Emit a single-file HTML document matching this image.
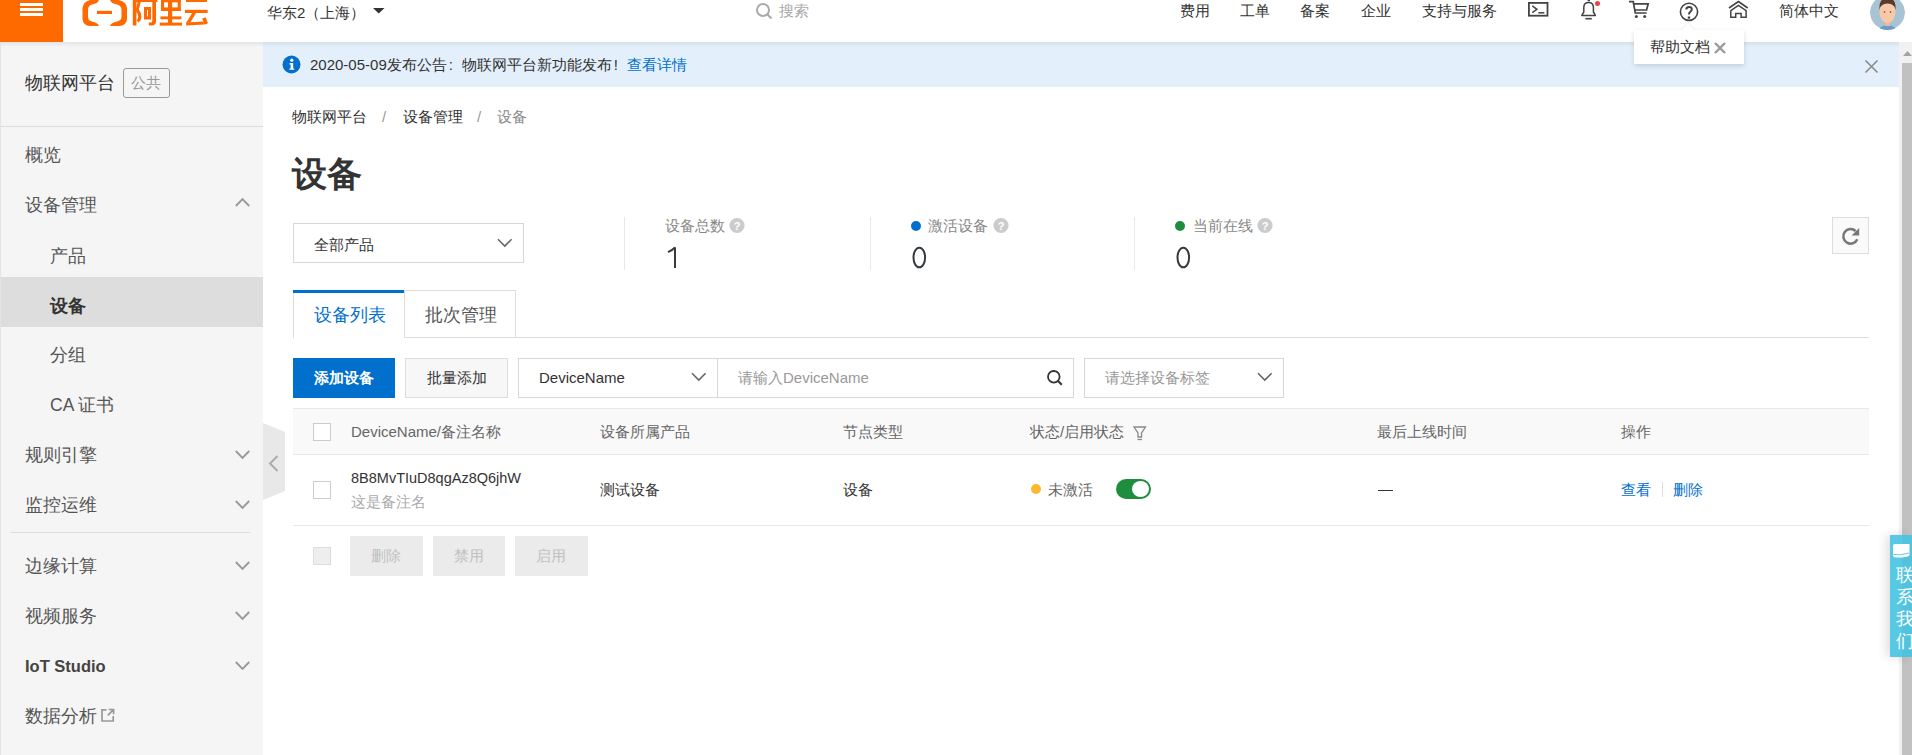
<!DOCTYPE html>
<html><head><meta charset="utf-8">
<style>
*{box-sizing:border-box;margin:0;padding:0}
html,body{width:1912px;height:755px;overflow:hidden;background:#fff}
body{font-family:"Liberation Sans",sans-serif;color:#333;position:relative}
.a{position:absolute;white-space:nowrap}
.f15{font-size:15px;line-height:20px}
.f17{font-size:17.5px;line-height:20px}
svg{position:absolute;overflow:visible}
</style></head><body>

<!-- HEADER -->
<div class="a" style="left:0;top:0;width:1912px;height:42px;background:#fff"></div>
<div class="a" style="left:0;top:0;width:63px;height:42px;background:#ff6a00"></div>
<div class="a" style="left:20px;top:3px;width:23px;height:3px;background:#fff"></div>
<div class="a" style="left:20px;top:8px;width:23px;height:3px;background:#fff"></div>
<div class="a" style="left:20px;top:13px;width:23px;height:3px;background:#fff"></div>

<!-- logo -->
<svg style="left:0;top:0" width="220" height="42">
  <g fill="#ff6a00">
    <path d="M95 0 L90 0 Q83 2 82.5 8 L82.5 19 Q83 25.5 90 26 L99 26 Q98 22.5 92 21.5 Q88 20.5 88 17 L88 10 Q88 5.5 92 4.5 Q98 3.5 99 0 Z"/>
    <path d="M113 0 L119 0 Q126.5 2 127 8 L127 19 Q126.5 25.5 119 26 L110 26 Q111 22.5 117 21.5 Q121.5 20.5 121.5 17 L121.5 10 Q121.5 5.5 117 4.5 Q111 3.5 110 0 Z"/>
    <rect x="97" y="10.8" width="15" height="3.2"/>
  </g>
  <g fill="#ff6a00">
    <rect x="132.8" y="0" width="3.6" height="25.5"/>
    <path d="M134 -1 L141.5 -1 L138.8 9.5 Q141.6 13 141.4 17 Q141.2 21 138.2 22.5 L136.8 20 Q138.2 19 138.2 16.8 Q138.2 13.8 135.5 10.2 L137.6 2.2 L134 2.2 Z"/>
    <rect x="136" y="-1" width="21.4" height="3"/>
    <rect x="152.3" y="0" width="3.7" height="22.5"/>
    <path d="M152.3 21 L156 21 Q156 25.6 151.5 25.6 L149 25.6 L148.6 22.6 L151 22.6 Q152.3 22.6 152.3 21 Z"/>
    <path d="M144 7 L151 7 L151 19.6 L144 19.6 Z M147 10 L147 16.6 L148 16.6 L148 10 Z" fill-rule="evenodd"/>
    <rect x="161" y="-1" width="19.8" height="3.3"/>
    <rect x="161" y="7.4" width="19.8" height="3.6"/>
    <rect x="161" y="0" width="3.1" height="11"/>
    <rect x="177.7" y="0" width="3.1" height="11"/>
    <rect x="168" y="0" width="4.2" height="24"/>
    <rect x="160.4" y="16.4" width="21" height="2.9"/>
    <rect x="159.8" y="22.6" width="22.3" height="3"/>
    <rect x="186" y="-1" width="21" height="3"/>
    <rect x="185" y="9.8" width="22.7" height="3.2"/>
    <path d="M192.2 13 L196 13 L190.2 22.8 L186.2 22.8 Z"/>
    <path d="M186 22.6 L203.5 21.6 L204 24.6 L186.3 25.6 Z"/>
    <path d="M202.3 18.6 L205.6 17.2 L208 23.3 L204.4 24.8 Z"/>
  </g>
</svg>

<div class="a f15" style="left:267px;top:3px;color:#333">华东2（上海）</div>
<svg style="left:373px;top:8px" width="12" height="6"><path d="M0 0 L11.5 0 L5.75 5.5 Z" fill="#333"/></svg>

<svg style="left:755px;top:2px" width="20" height="20"><circle cx="8" cy="8" r="6" fill="none" stroke="#aaa" stroke-width="2"/><path d="M12.5 12.5 L16.5 16.5" stroke="#aaa" stroke-width="2.2"/></svg>
<div class="a f15" style="left:779px;top:1px;color:#aaa">搜索</div>

<div class="a f15" style="left:1180px;top:1px">费用</div>
<div class="a f15" style="left:1240px;top:1px">工单</div>
<div class="a f15" style="left:1300px;top:1px">备案</div>
<div class="a f15" style="left:1361px;top:1px">企业</div>
<div class="a f15" style="left:1422px;top:1px">支持与服务</div>

<!-- terminal -->
<svg style="left:1528px;top:2px" width="21" height="15"><rect x="0.9" y="0.9" width="18.6" height="12.8" fill="none" stroke="#444" stroke-width="1.8"/><path d="M4.3 3.9 L8.9 7.3 L4.3 10.6" fill="none" stroke="#444" stroke-width="1.5"/><path d="M10.3 10.8 L16.4 10.8" stroke="#444" stroke-width="1.5"/></svg>
<!-- bell -->
<svg style="left:1580px;top:0" width="22" height="21"><path d="M7.6 0.4 L10 0.4" stroke="#444" stroke-width="1.6"/><path d="M1.8 15.4 L15.4 15.4 L13.4 12 L13.4 7.6 Q13.4 2.4 8.6 2.4 Q3.8 2.4 3.8 7.6 L3.8 12 Z" fill="none" stroke="#444" stroke-width="1.5" stroke-linejoin="round"/><path d="M5.4 18.7 L11.8 18.7" stroke="#444" stroke-width="1.6"/><circle cx="17.5" cy="3.5" r="2.5" fill="#ef4444"/></svg>
<!-- cart -->
<svg style="left:1628px;top:0" width="22" height="19"><path d="M1 1.6 L5.2 1.6 L7.3 13 L18.7 13 M5.6 3.8 L20.2 3.8 L18.6 10 L6.8 10" fill="none" stroke="#444" stroke-width="1.7"/><circle cx="8.3" cy="16.5" r="1.5" fill="#444"/><circle cx="16.7" cy="16.5" r="1.5" fill="#444"/></svg>
<!-- help -->
<svg style="left:1679px;top:2px" width="20" height="20"><circle cx="10" cy="9.8" r="8.6" fill="none" stroke="#444" stroke-width="1.6"/><path d="M7.3 7.6 Q7.3 4.9 10 4.9 Q12.8 4.9 12.8 7.3 Q12.8 8.8 11.2 9.8 Q10 10.5 10 12.5" fill="none" stroke="#444" stroke-width="2"/><rect x="8.8" y="14.5" width="2.4" height="2.2" fill="#444"/></svg>
<!-- home -->
<svg style="left:1720px;top:0" width="30" height="20"><path d="M9 8 L18.4 1.5 L27.7 8" fill="none" stroke="#444" stroke-width="1.6"/><path d="M10.8 10.6 L18.4 5.4 L26.1 10.6 L26.1 17.2 L21.1 17.2 L21.1 13.6 L15.7 13.6 L15.7 17.2 L10.8 17.2 Z" fill="none" stroke="#444" stroke-width="1.5"/></svg>

<div class="a f15" style="left:1779px;top:1px">简体中文</div>
<!-- avatar -->
<svg style="left:1870px;top:-5px" width="36" height="36"><defs><clipPath id="av"><circle cx="17.5" cy="17.5" r="17.5"/></clipPath></defs><g clip-path="url(#av)"><circle cx="17.5" cy="17.5" r="17.5" fill="#a8c3d3"/><path d="M6 40 Q8 31 17.5 30 Q27 31 29 40 Z" fill="#6a9cc4"/><rect x="15" y="25" width="5" height="6" fill="#f0b896"/><ellipse cx="17.5" cy="17" rx="8" ry="11" fill="#f7c9a8"/><path d="M9.5 15 Q8.5 3 17.5 3 Q26.5 3 25.5 15 Q25 9 17.5 8.5 Q10 9 9.5 15 Z" fill="#5b3a2e"/><circle cx="14.5" cy="17" r="0.8" fill="#5b3a2e"/><circle cx="20.5" cy="17" r="0.8" fill="#5b3a2e"/></g></svg>

<!-- SIDEBAR -->
<div class="a" style="left:0;top:42px;width:263px;height:713px;background:#f5f5f5"></div>
<div class="a f17" style="left:25px;top:73px;color:#333">物联网平台</div>
<div class="a" style="left:123px;top:68px;width:47px;height:30px;border:1px solid #999;border-radius:3px"></div>
<div class="a f15" style="left:131px;top:73px;color:#999">公共</div>
<div class="a" style="left:0;top:126px;width:263px;height:1px;background:#ddd"></div>

<div class="a f17" style="color:#555;left:25px;top:145px">概览</div>
<div class="a f17" style="left:25px;top:195px;color:#555">设备管理</div>
<div class="a f17" style="left:50px;top:246px;color:#555">产品</div>
<div class="a" style="left:0;top:277px;width:263px;height:50px;background:#dddddd"></div>
<div class="a f17" style="left:50px;top:296px;color:#333;font-weight:bold">设备</div>
<div class="a f17" style="left:50px;top:345px;color:#555">分组</div>
<div class="a f17" style="left:50px;top:395px;color:#555">CA 证书</div>
<div class="a f17" style="left:25px;top:445px;color:#555">规则引擎</div>
<div class="a f17" style="left:25px;top:495px;color:#555">监控运维</div>
<div class="a" style="left:10px;top:532px;width:240px;height:1px;background:#ddd"></div>
<div class="a f17" style="left:25px;top:556px;color:#555">边缘计算</div>
<div class="a f17" style="left:25px;top:606px;color:#555">视频服务</div>
<div class="a f17" style="left:25px;top:656px;color:#555;font-weight:bold;font-size:16.5px;color:#444">IoT Studio</div>
<div class="a f17" style="left:25px;top:706px;color:#555">数据分析</div>
<svg style="left:101px;top:708px" width="14" height="15"><path d="M5.5 1.8 L1 1.8 L1 13 L12.2 13 L12.2 8 M7.8 1.5 L12.6 1.5 L12.6 6.3 M12.2 1.9 L6.8 7.3" fill="none" stroke="#999" stroke-width="1.7"/></svg>

<svg style="left:235px;top:198px" width="16" height="9"><path d="M0.8 8 L7.5 1.2 L14.2 8" fill="none" stroke="#999" stroke-width="1.9"/></svg>
<svg style="left:235px;top:450px" width="16" height="9"><path d="M0.8 1 L7.5 7.8 L14.2 1" fill="none" stroke="#999" stroke-width="1.9"/></svg>
<svg style="left:235px;top:500px" width="16" height="9"><path d="M0.8 1 L7.5 7.8 L14.2 1" fill="none" stroke="#999" stroke-width="1.9"/></svg>
<svg style="left:235px;top:561px" width="16" height="9"><path d="M0.8 1 L7.5 7.8 L14.2 1" fill="none" stroke="#999" stroke-width="1.9"/></svg>
<svg style="left:235px;top:611px" width="16" height="9"><path d="M0.8 1 L7.5 7.8 L14.2 1" fill="none" stroke="#999" stroke-width="1.9"/></svg>
<svg style="left:235px;top:661px" width="16" height="9"><path d="M0.8 1 L7.5 7.8 L14.2 1" fill="none" stroke="#999" stroke-width="1.9"/></svg>

<!-- collapse handle -->
<svg style="left:263px;top:423px" width="22" height="78"><path d="M0 0 L22 9 L22 68 L0 77 Z" fill="#e8e8e8"/><path d="M14.5 33 L7 40.5 L14.5 48" fill="none" stroke="#aaa" stroke-width="1.9"/></svg>

<!-- NOTICE -->
<div class="a" style="left:263px;top:42px;width:1636px;height:45px;background:#e3f0fb"></div>
<svg style="left:282px;top:55px" width="19" height="19"><circle cx="9.5" cy="9.5" r="9" fill="#0070cc"/><circle cx="9.8" cy="5.2" r="1.6" fill="#fff"/><path d="M7.6 8 L11.2 8 L11.2 13.4 L12.3 13.4 L12.3 14.8 L7.4 14.8 L7.4 13.4 L8.6 13.4 L8.6 9.4 L7.6 9.4 Z" fill="#fff"/></svg>
<div class="a f15" style="left:310px;top:55px;color:#333">2020-05-09发布公告<span style="display:inline-block;width:15px;padding-left:2px">:</span>物联网平台新功能发布<span style="display:inline-block;width:15px;padding-left:2px">!</span><span style="color:#0070cc">查看详情</span></div>
<svg style="left:1865px;top:60px" width="13" height="13"><path d="M0.5 0.5 L12.5 12.5 M12.5 0.5 L0.5 12.5" stroke="#888" stroke-width="1.5"/></svg>

<!-- scrollbar -->
<div class="a" style="left:1899px;top:42px;width:13px;height:713px;background:#f1f1f1"></div>
<svg style="left:1902px;top:50px" width="10" height="7"><path d="M1 6 L5.5 1 L10 6 Z" fill="#a3a3a3"/></svg>
<div class="a" style="left:1902px;top:63px;width:10px;height:692px;background:#c1c1c1"></div>

<!-- BREADCRUMB -->
<div class="a f15" style="left:292px;top:107px;color:#333">物联网平台</div>
<div class="a f15" style="left:382px;top:107px;color:#999">/</div>
<div class="a f15" style="left:403px;top:107px;color:#333">设备管理</div>
<div class="a f15" style="left:477px;top:107px;color:#999">/</div>
<div class="a f15" style="left:497px;top:107px;color:#888">设备</div>

<div class="a" style="left:292px;top:154px;font-size:35px;line-height:40px;font-weight:bold;color:#333">设备</div>

<!-- product select -->
<div class="a" style="left:293px;top:223px;width:231px;height:40px;border:1px solid #d7d7d7"></div>
<div class="a f15" style="left:314px;top:235px">全部产品</div>
<svg style="left:497px;top:238px" width="16" height="10"><path d="M1 1.2 L7.8 8 L14.6 1.2" fill="none" stroke="#666" stroke-width="1.6"/></svg>

<!-- stats -->
<div class="a" style="left:624px;top:217px;width:1px;height:53px;background:#e8e8e8"></div>
<div class="a f15" style="left:665px;top:216px;color:#888">设备总数</div>
<svg style="left:729px;top:218px" width="16" height="16"><circle cx="8" cy="7.5" r="7.6" fill="#ccc"/><text x="8" y="12" font-size="11" font-weight="bold" text-anchor="middle" fill="#fff" font-family="Liberation Sans">?</text></svg>
<svg style="left:666px;top:246px" width="12" height="24"><path d="M9 1.2 L9 22 M9 1.5 Q6 4.5 2 6.2" fill="none" stroke="#333a40" stroke-width="2"/></svg>

<div class="a" style="left:870px;top:217px;width:1px;height:53px;background:#e8e8e8"></div>
<div class="a" style="left:911px;top:221px;width:10px;height:10px;border-radius:50%;background:#0070cc"></div>
<div class="a f15" style="left:928px;top:216px;color:#888">激活设备</div>
<svg style="left:993px;top:218px" width="16" height="16"><circle cx="8" cy="7.5" r="7.6" fill="#ccc"/><text x="8" y="12" font-size="11" font-weight="bold" text-anchor="middle" fill="#fff" font-family="Liberation Sans">?</text></svg>
<svg style="left:911px;top:246px" width="17" height="24"><ellipse cx="8.3" cy="11.5" rx="5.8" ry="9.8" fill="none" stroke="#333a40" stroke-width="2"/></svg>

<div class="a" style="left:1134px;top:217px;width:1px;height:53px;background:#e8e8e8"></div>
<div class="a" style="left:1175px;top:221px;width:10px;height:10px;border-radius:50%;background:#1e8e3e"></div>
<div class="a f15" style="left:1193px;top:216px;color:#888">当前在线</div>
<svg style="left:1257px;top:218px" width="16" height="16"><circle cx="8" cy="7.5" r="7.6" fill="#ccc"/><text x="8" y="12" font-size="11" font-weight="bold" text-anchor="middle" fill="#fff" font-family="Liberation Sans">?</text></svg>
<svg style="left:1175px;top:246px" width="17" height="24"><ellipse cx="8.3" cy="11.5" rx="5.8" ry="9.8" fill="none" stroke="#333a40" stroke-width="2"/></svg>

<!-- refresh -->
<div class="a" style="left:1832px;top:217px;width:37px;height:37px;border:1px solid #ddd;background:#fafafa"></div>
<svg style="left:1841px;top:226px" width="20" height="20"><path d="M16.3 13.2 A7.3 7.3 0 1 1 14.6 5" fill="none" stroke="#777" stroke-width="2.5"/><path d="M18.2 2 L18.2 9.6 L10.6 9.6 Z" fill="#777"/></svg>

<!-- TABS -->
<div class="a" style="left:404px;top:337px;width:1465px;height:1px;background:#ddd"></div>
<div class="a" style="left:293px;top:290px;width:111px;height:48px;border-left:1px solid #ddd;background:#fff"></div>
<div class="a" style="left:293px;top:290px;width:111px;height:3px;background:#0070cc"></div>
<div class="a f17" style="left:314px;top:305px;color:#0070cc">设备列表</div>
<div class="a" style="left:404px;top:290px;width:112px;height:48px;border:1px solid #ddd"></div>
<div class="a f17" style="left:425px;top:305px;color:#555">批次管理</div>

<!-- toolbar -->
<div class="a" style="left:293px;top:358px;width:102px;height:40px;background:#0070cc"></div>
<div class="a f15" style="left:314px;top:368px;color:#fff;font-weight:bold">添加设备</div>
<div class="a" style="left:405px;top:358px;width:103px;height:40px;border:1px solid #ddd;background:#f7f7f7"></div>
<div class="a f15" style="left:427px;top:368px;color:#333">批量添加</div>

<div class="a" style="left:518px;top:358px;width:556px;height:40px;border:1px solid #d7d7d7"></div>
<div class="a" style="left:717px;top:358px;width:1px;height:40px;background:#d7d7d7"></div>
<div class="a f15" style="left:539px;top:368px;color:#333">DeviceName</div>
<svg style="left:691px;top:372px" width="16" height="10"><path d="M1 1.2 L7.8 8 L14.6 1.2" fill="none" stroke="#666" stroke-width="1.6"/></svg>
<div class="a f15" style="left:738px;top:368px;color:#999">请输入DeviceName</div>
<svg style="left:1047px;top:370px" width="17" height="17"><circle cx="6.8" cy="6.8" r="5.8" fill="none" stroke="#333" stroke-width="1.8"/><path d="M10.8 10.8 L14.8 14.8" stroke="#333" stroke-width="2"/></svg>

<div class="a" style="left:1084px;top:358px;width:200px;height:40px;border:1px solid #d7d7d7"></div>
<div class="a f15" style="left:1105px;top:368px;color:#999">请选择设备标签</div>
<svg style="left:1257px;top:372px" width="16" height="10"><path d="M1 1.2 L7.8 8 L14.6 1.2" fill="none" stroke="#666" stroke-width="1.6"/></svg>

<!-- TABLE -->
<div class="a" style="left:293px;top:408px;width:1576px;height:47px;background:#f9f9f9;border-top:1px solid #e8e8e8;border-bottom:1px solid #e8e8e8"></div>
<div class="a" style="left:313px;top:423px;width:18px;height:18px;border:1px solid #ccc;background:#fff"></div>
<div class="a f15" style="left:351px;top:422px;color:#666">DeviceName/备注名称</div>
<div class="a f15" style="left:600px;top:422px;color:#666">设备所属产品</div>
<div class="a f15" style="left:843px;top:422px;color:#666">节点类型</div>
<div class="a f15" style="left:1030px;top:422px;color:#666">状态/启用状态</div>
<svg style="left:1133px;top:426px" width="14" height="15"><path d="M1 1 L12.5 1 L8.5 7 L8.5 11 L5 11 L5 7 Z" fill="none" stroke="#888" stroke-width="1.3"/><path d="M4.5 13.5 L9 13.5" stroke="#888" stroke-width="1.3"/></svg>
<div class="a f15" style="left:1377px;top:422px;color:#666">最后上线时间</div>
<div class="a f15" style="left:1621px;top:422px;color:#666">操作</div>

<div class="a" style="left:293px;top:525px;width:1576px;height:1px;background:#e8e8e8"></div>
<div class="a" style="left:313px;top:481px;width:18px;height:18px;border:1px solid #ccc;background:#fff"></div>
<div class="a f15" style="left:351px;top:468px;color:#333;font-size:14.5px">8B8MvTIuD8qgAz8Q6jhW</div>
<div class="a f15" style="left:351px;top:492px;color:#aaa">这是备注名</div>
<div class="a f15" style="left:600px;top:480px;color:#333">测试设备</div>
<div class="a f15" style="left:843px;top:480px;color:#333">设备</div>
<div class="a" style="left:1031px;top:484px;width:10px;height:10px;border-radius:50%;background:#ffb72b"></div>
<div class="a f15" style="left:1048px;top:480px;color:#666">未激活</div>
<div class="a" style="left:1116px;top:479px;width:35px;height:20px;border-radius:10px;background:#1e8e3e"></div>
<div class="a" style="left:1132px;top:481px;width:17px;height:16px;border-radius:50%;background:#fff"></div>
<div class="a" style="left:1378px;top:490px;width:15px;height:1px;background:#333"></div>
<div class="a f15" style="left:1621px;top:480px;color:#0070cc">查看</div>
<div class="a" style="left:1662px;top:482px;width:1px;height:15px;background:#ddd"></div>
<div class="a f15" style="left:1673px;top:480px;color:#0070cc">删除</div>

<!-- footer actions -->
<div class="a" style="left:313px;top:547px;width:18px;height:18px;border:1px solid #ddd;background:#eee"></div>
<div class="a" style="left:350px;top:536px;width:73px;height:40px;background:#ebebeb"></div>
<div class="a f15" style="left:371px;top:546px;color:#c0c0c0">删除</div>
<div class="a" style="left:433px;top:536px;width:72px;height:40px;background:#ebebeb"></div>
<div class="a f15" style="left:454px;top:546px;color:#c0c0c0">禁用</div>
<div class="a" style="left:515px;top:536px;width:73px;height:40px;background:#ebebeb"></div>
<div class="a f15" style="left:536px;top:546px;color:#c0c0c0">启用</div>

<div class="a" style="left:0;top:42px;width:1899px;height:5px;background:linear-gradient(rgba(0,0,0,.07),rgba(0,0,0,0))"></div>
<div class="a" style="left:0;top:42px;width:1px;height:713px;background:#e4e4e4"></div>
<!-- help popover -->
<div class="a" style="left:1634px;top:30px;width:110px;height:34px;background:#fff;box-shadow:0 2px 5px rgba(0,0,0,.15)"></div>
<svg style="left:1680px;top:22px" width="16" height="9"><path d="M0 8.5 L8 0.5 L16 8.5 Z" fill="#fff" stroke="#eee" stroke-width="1"/><rect x="0" y="8" width="16" height="2" fill="#fff"/></svg>
<div class="a f15" style="left:1650px;top:37px;color:#333">帮助文档</div>
<svg style="left:1714px;top:42px" width="12" height="12"><path d="M1 1 L11 11 M11 1 L1 11" stroke="#999" stroke-width="2.4"/></svg>

<!-- contact widget -->
<div class="a" style="left:1890px;top:535px;width:22px;height:122px;background:rgba(70,195,225,.9);box-shadow:-4px 0 10px rgba(0,0,0,.12)"></div>
<svg style="left:1892px;top:543px" width="20" height="16"><path d="M1 3 Q1 1 3 1 L17.5 1 L17.5 12.5 Q14 14.8 4 14.5 Q1 14.3 1 12 Z" fill="#fff"/><path d="M1.5 11.5 Q8 12.5 17 10" fill="none" stroke="#5cc6df" stroke-width="0.9"/></svg>
<div class="a" style="left:1896px;top:563.5px;width:18px;font-size:17.5px;line-height:22.3px;color:#fff;white-space:normal;word-break:break-all">联系我们</div>

</body></html>
